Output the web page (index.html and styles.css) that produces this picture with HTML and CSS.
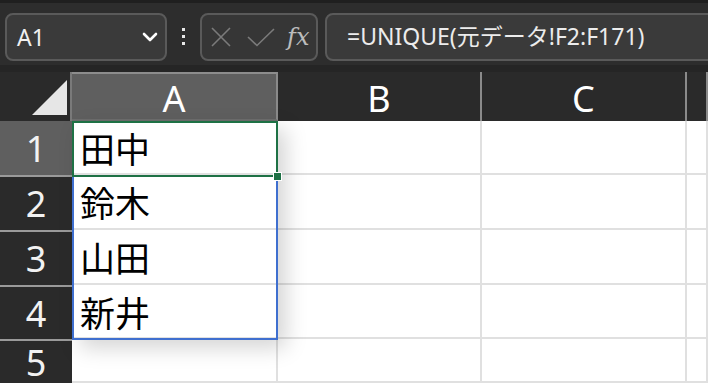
FILE: index.html
```html
<!DOCTYPE html>
<html lang="ja">
<head>
    <meta charset="UTF-8">
    <title>Excel UNIQUE</title>
    <link rel="stylesheet" href="styles.css">
</head>
<body>

    <!-- Formula bar -->
    <div class="toolbar">
        <div class="namebox">
            <span>A1</span>
            <svg class="chevron" width="16" height="10" viewBox="0 0 16 10">
                <polyline points="2,2 8,8 14,2" fill="none" stroke="#ffffff" stroke-width="2.6" stroke-linecap="round" stroke-linejoin="round"/>
            </svg>
        </div>
        <div class="grip">
            <i></i><i></i><i></i>
        </div>
        <div class="fxbox">
            <svg width="20" height="20" viewBox="0 0 20 20">
                <path d="M1 1 L19 19 M19 1 L1 19" stroke="#7b7b7b" stroke-width="1.6" fill="none"/>
            </svg>
            <svg width="28" height="19" viewBox="0 0 28 19">
                <polyline points="1,9 10,17.5 27,1" stroke="#7b7b7b" stroke-width="1.6" fill="none"/>
            </svg>
            <span class="fx">fx</span>
        </div>
        <div class="formula">=UNIQUE(元データ!F2:F171)</div>
    </div>

    <!-- Sheet -->
    <div class="sheet">
        <div class="corner">
            <svg width="72" height="49" viewBox="0 0 72 49">
                <polygon points="67,8 67,43 32,43" fill="#e6e6e6"/>
            </svg>
        </div>
        <div class="colhead active">A</div>
        <div class="colhead">B</div>
        <div class="colhead">C</div>
        <div class="colhead"></div>

        <div class="rowhead active">1</div>
        <div class="cell">田中</div>
        <div class="cell"></div>
        <div class="cell"></div>
        <div class="cell"></div>

        <div class="rowhead">2</div>
        <div class="cell">鈴木</div>
        <div class="cell"></div>
        <div class="cell"></div>
        <div class="cell"></div>

        <div class="rowhead">3</div>
        <div class="cell">山田</div>
        <div class="cell"></div>
        <div class="cell"></div>
        <div class="cell"></div>

        <div class="rowhead">4</div>
        <div class="cell">新井</div>
        <div class="cell"></div>
        <div class="cell"></div>
        <div class="cell"></div>

        <div class="rowhead">5</div>
        <div class="cell"></div>
        <div class="cell"></div>
        <div class="cell"></div>
        <div class="cell"></div>

        <!-- selection overlays -->
        <div class="range"></div>
        <div class="activecell"><span class="handle"></span></div>
    </div>

</body>
</html>
```

FILE: styles.css
```css
body {
    margin: 0;
    padding: 0;
    width: 708px;
    height: 383px;
    overflow: hidden;
    background: #ffffff;
    font-family: "Noto Sans", "Noto Sans CJK JP", sans-serif;
}

.toolbar {
    display: flex;
    align-items: flex-start;
    height: 72px;
    padding: 10px 0 0 5px;
    box-sizing: border-box;
    background: #2d2d2d;
    border-top: 3px solid #1f1f1f;
    border-bottom: 7px solid #252525;
    overflow: hidden;
}
.namebox {
    flex: none;
    display: flex;
    align-items: center;
    justify-content: space-between;
    width: 162px;
    height: 48px;
    box-sizing: border-box;
    padding: 0 7px 0 10px;
    border: 2px solid #5a5a5a;
    border-radius: 8px;
    background: #3a3a3a;
    color: #f0f0f0;
    font-size: 23px;
}
.grip {
    flex: none;
    display: flex;
    flex-direction: column;
    align-items: center;
    gap: 4px;
    width: 33px;
    padding-top: 15px;
}
.grip i {
    display: block;
    width: 3px;
    height: 3px;
    background: #e8e8e8;
}
.fxbox {
    flex: none;
    display: flex;
    align-items: center;
    width: 118px;
    height: 48px;
    box-sizing: border-box;
    padding-left: 9px;
    border: 2px solid #5a5a5a;
    border-radius: 8px;
    background: #363636;
}
.fxbox svg + svg {
    margin-left: 16px;
}
.fx {
    font-family: "DejaVu Serif", serif;
    font-style: italic;
    font-size: 24px;
    color: #bcbcbc;
    margin-left: 12px;
}
.formula {
    flex: none;
    width: 420px;
    height: 48px;
    margin-left: 7px;
    box-sizing: border-box;
    padding-left: 20px;
    border: 2px solid #5a5a5a;
    border-radius: 8px;
    background: #3a3a3a;
    color: #ececec;
    font-size: 23px;
    line-height: 43px;
    white-space: nowrap;
}

.sheet {
    position: relative;
    display: grid;
    grid-template-columns: 72px 206px 204px 205px 1fr;
    grid-template-rows: 49px 54px 55px 55px 54px 44px;
}
.corner {
    background: #2a2a2a;
    border-right: 2px solid #7a7a7a;
    box-sizing: border-box;
}
.corner svg {
    display: block;
}
.colhead {
    display: flex;
    align-items: center;
    justify-content: center;
    padding-top: 3px;
    background: #2a2a2a;
    color: #ffffff;
    font-size: 36px;
    border-right: 2px solid #8a8a8a;
}
.colhead.active {
    background: #5f5f5f;
    border-top: 2px solid #8d8d8d;
    border-bottom: 2px solid #6d6d6d;
}
.rowhead {
    display: flex;
    align-items: center;
    justify-content: center;
    background: #2a2a2a;
    color: #f2f2f2;
    font-size: 36px;
    border-top: 2px solid #9a9a9a;
    box-sizing: border-box;
}
.rowhead.active {
    background: #5f5f5f;
    border-top: none;
}
.cell {
    display: flex;
    align-items: center;
    padding-left: 8px;
    color: #000000;
    font-family: "Noto Sans CJK JP", sans-serif;
    font-size: 35px;
    border-right: 2px solid #e0e0e0;
    border-bottom: 2px solid #e0e0e0;
}

.range {
    position: absolute;
    left: 72px;
    top: 49px;
    width: 206px;
    height: 219px;
    box-sizing: border-box;
    border: 2px solid #3f6fcf;
    box-shadow: 8px 8px 20px rgba(0, 0, 0, 0.17);
}
.activecell {
    position: absolute;
    left: 72px;
    top: 49px;
    width: 206px;
    height: 56px;
    box-sizing: border-box;
    border: 2px solid #1e7145;
}
.handle {
    position: absolute;
    right: -6px;
    bottom: -6px;
    width: 7px;
    height: 7px;
    background: #1e7145;
    border: 1px solid #ffffff;
}
```
